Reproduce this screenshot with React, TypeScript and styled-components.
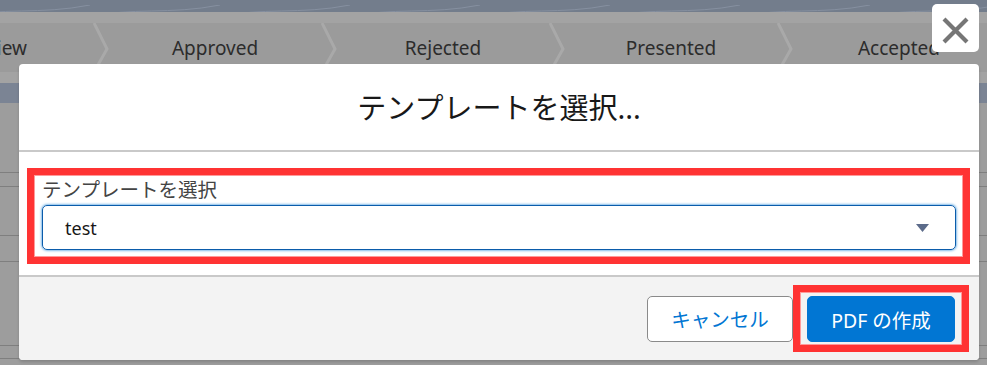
import React from 'react';
import styled, { createGlobalStyle } from 'styled-components';

const GlobalStyle = createGlobalStyle`
  html, body {
    margin: 0;
    padding: 0;
    width: 987px;
    height: 365px;
    overflow: hidden;
    background: #9d9d9d;
  }
  * { box-sizing: border-box; }
  body {
    font-family: 'Noto Sans', 'Noto Sans CJK JP', sans-serif;
  }
`;

const STEPS = ['Review', 'Approved', 'Rejected', 'Presented', 'Accepted'];
const ROW_HEIGHTS = [70, 14, 49, 26, 84, 13];

const Page = styled.div`
  position: relative;
  width: 987px;
  height: 365px;
  overflow: hidden;
  display: flex;
  flex-direction: column;
`;

const TopBand = styled.div`
  height: 12px;
  background: #737d8c;
  overflow: hidden;
  flex-shrink: 0;
`;

const LightBand = styled.div<{ h: number }>`
  height: ${(p) => p.h}px;
  background: #a3a3a3;
  flex-shrink: 0;
`;

const PathBar = styled.div`
  height: 49px;
  background: #9b9b9b;
  display: flex;
  margin-left: -121px;
  flex-shrink: 0;
`;

const Step = styled.div<{ first?: boolean }>`
  position: relative;
  width: 228px;
  flex-shrink: 0;
  display: flex;
  align-items: center;
  justify-content: center;
  padding: ${(p) => (p.first ? '0 0 0 6px' : '0 12px 0 0')};
  font-size: 19px;
  color: #2c2c2c;
`;

const Chevron = styled.svg`
  position: absolute;
  right: -4px;
  top: 0;
`;

const BlueBand = styled.div`
  height: 20px;
  background: #7b8494;
  flex-shrink: 0;
`;

const Row = styled.div<{ h: number }>`
  height: ${(p) => p.h}px;
  border-bottom: 1px solid #7f7f7f;
  flex-shrink: 0;
`;

const Modal = styled.div`
  position: absolute;
  left: 19px;
  top: 64px;
  width: 960px;
  height: 296px;
  border-radius: 4px;
  background: #fff;
  overflow: hidden;
  box-shadow: 0 2px 3px rgba(0, 0, 0, 0.16);
  display: flex;
  flex-direction: column;
`;

const Header = styled.div`
  height: 88px;
  flex-shrink: 0;
  display: flex;
  align-items: center;
  justify-content: center;
  border-bottom: 2px solid #c9c9c9;
  font-size: 29px;
  color: #181818;
  padding-bottom: 2px;
`;

const Body = styled.div`
  flex-shrink: 0;
  padding: 16px 9px 11px 8px;
  border-bottom: 2px solid #c9c9c9;
`;

const Highlight = styled.div<{ pad: string }>`
  border: 7px solid #ff3333;
  outline: 1px solid #ff9a9a;
  outline-offset: -8px;
  padding: ${(p) => p.pad};
`;

const Label = styled.div`
  font-size: 19.5px;
  line-height: 24px;
  color: #444;
  margin-bottom: 3px;
`;

const Select = styled.div`
  height: 45px;
  border: 1px solid #0b5cab;
  border-radius: 5px;
  box-shadow: 0 0 3px #0176d3;
  display: flex;
  align-items: center;
  justify-content: space-between;
  padding: 0 26px 0 22px;
  font-size: 18px;
  color: #181818;
`;

const Footer = styled.div`
  flex: 1;
  background: #f3f3f3;
  display: flex;
  align-items: center;
  justify-content: flex-end;
  padding: 0 10px 0 0;
`;

const Button = styled.button<{ brand?: boolean }>`
  height: 46px;
  width: ${(p) => (p.brand ? 148 : 146)}px;
  border-radius: 5px;
  border: 1px solid ${(p) => (p.brand ? '#0176d3' : '#8a8a8a')};
  background: ${(p) => (p.brand ? '#0176d3' : '#fff')};
  color: ${(p) => (p.brand ? '#fff' : '#0176d3')};
  font-family: inherit;
  font-size: 19.5px;
  display: flex;
  align-items: center;
  justify-content: center;
  padding: 0;
`;

const CloseButton = styled.button`
  position: absolute;
  top: 4px;
  right: 8px;
  width: 47px;
  height: 48px;
  border: none;
  border-radius: 5px;
  background: #fff;
  padding: 0;
  display: flex;
`;

const TopoLines = () => (
  <svg width="987" height="12" viewBox="0 0 987 12">
    {[0, 1, 2, 3, 4, 5, 6, 7].map((i) => (
      <path
        key={i}
        d={`M${i * 130 - 40} 12 C ${i * 130} 2, ${i * 130 + 40} 10, ${i * 130 + 90} 0`}
        stroke="#8690a0"
        strokeWidth="1"
        fill="none"
      />
    ))}
  </svg>
);

export default function App() {
  return (
    <>
      <GlobalStyle />
      <Page>
        <TopBand>
          <TopoLines />
        </TopBand>
        <LightBand h={11} />
        <PathBar>
          {STEPS.map((s, i) => (
            <Step key={s} first={i === 0}>
              {s}
              <Chevron width="18" height="49" viewBox="0 0 18 49">
                <path d="M1 0 L14 26 L1 49" stroke="#a9a9a9" strokeWidth="3" fill="none" />
              </Chevron>
            </Step>
          ))}
        </PathBar>
        <LightBand h={11} />
        <BlueBand />
        {ROW_HEIGHTS.map((h, i) => (
          <Row key={i} h={h} />
        ))}

        <Modal>
          <Header>テンプレートを選択...</Header>
          <Body>
            <Highlight pad="3px 7px 7px 8px">
              <Label>テンプレートを選択</Label>
              <Select>
                <span>test</span>
                <svg width="13" height="8" viewBox="0 0 13 8">
                  <path d="M0 0 H13 L6.5 8 Z" fill="#5c6b8a" />
                </svg>
              </Select>
            </Highlight>
          </Body>
          <Footer>
            <Button>キャンセル</Button>
            <Highlight pad="4px 7px 3px 7px">
              <Button brand>PDF の作成</Button>
            </Highlight>
          </Footer>
        </Modal>

        <CloseButton aria-label="close">
          <svg width="47" height="48" viewBox="0 0 47 48">
            <path d="M12 15 L35 38 M35 15 L12 38" stroke="#767676" strokeWidth="4.2" />
          </svg>
        </CloseButton>
      </Page>
    </>
  );
}
